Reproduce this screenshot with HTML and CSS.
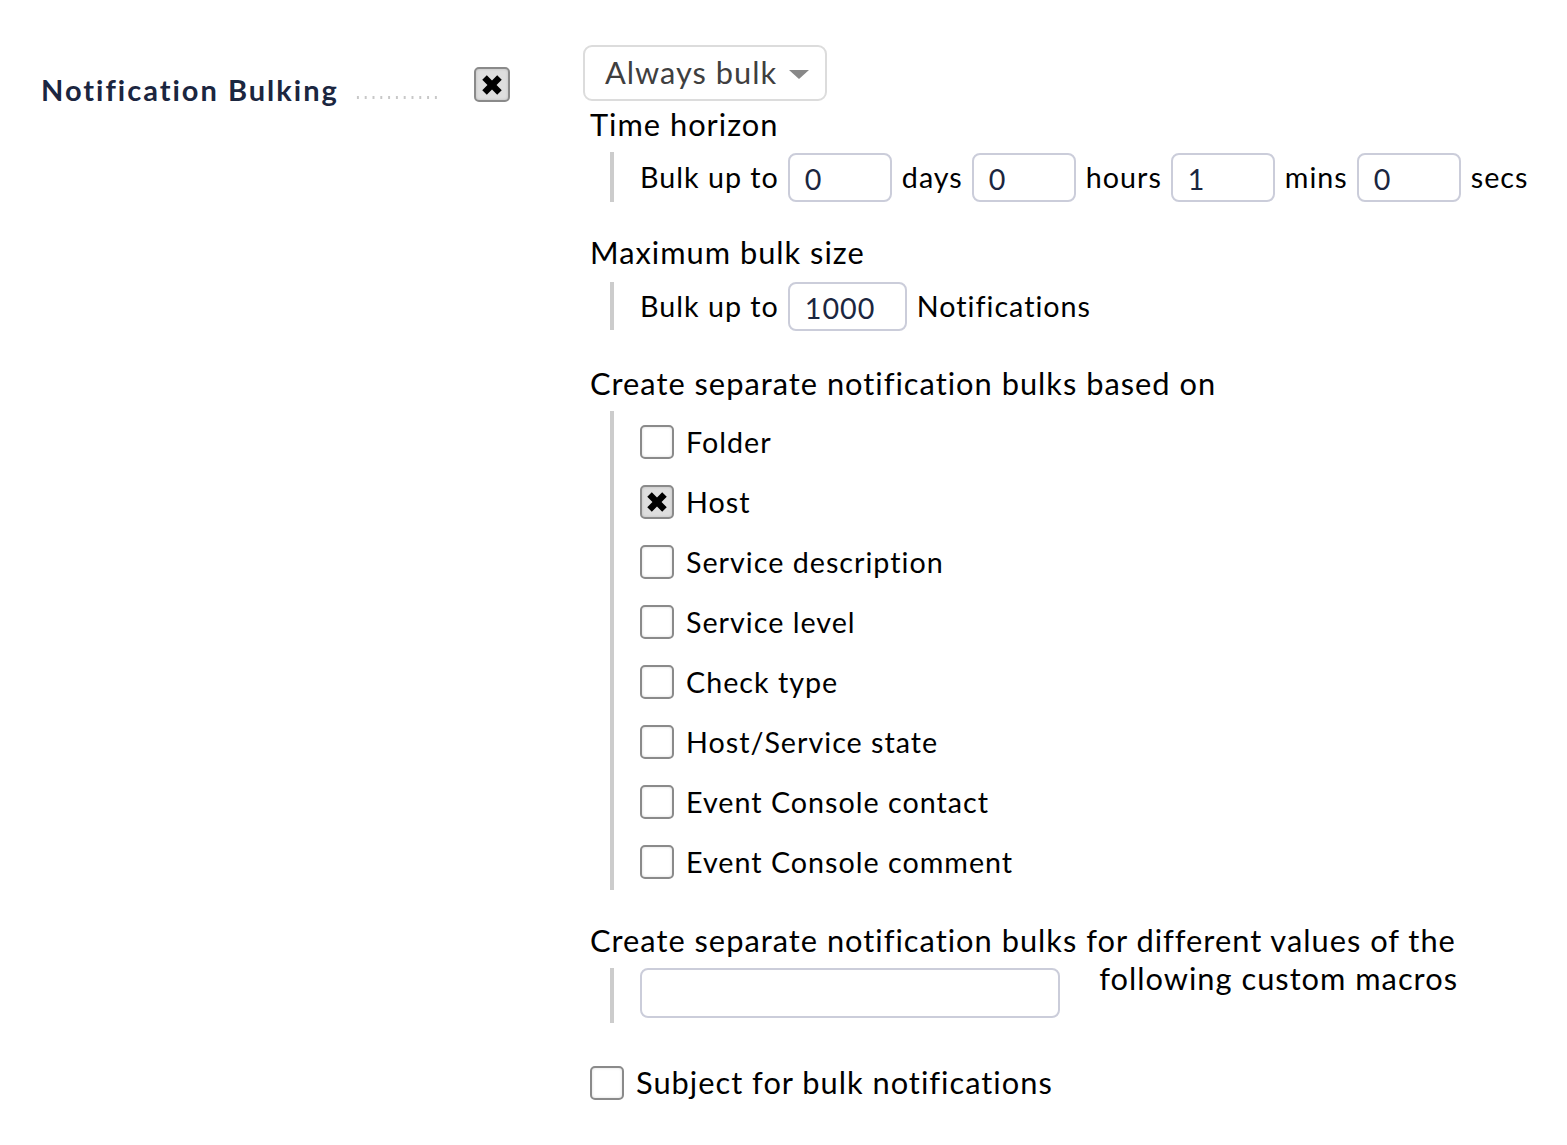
FILE: index.html
```html
<!DOCTYPE html>
<html>
<head>
<meta charset="utf-8">
<link rel="stylesheet" href="styles.css">
</head>
<body>
<div class="page">
  <div class="legend">
    <span class="legend-title">Notification Bulking</span>
    <span class="dots"></span>
    <span class="cb cb-checked cb-legend"><svg viewBox="0 0 20 20" class="x"><path d="M2.5 6 L6 2.5 L10 6.5 L14 2.5 L17.5 6 L13.5 10 L17.5 14 L14 17.5 L10 13.5 L6 17.5 L2.5 14 L6.5 10 Z"/></svg></span>
  </div>
  <div class="content">
    <div class="select">
      <span class="select-text">Always bulk</span>
      <span class="caret"></span>
    </div>

    <div class="title t-time">Time horizon</div>
    <div class="group g-time">
      <span class="txt">Bulk up to</span>
      <span class="input w104">0</span>
      <span class="txt">days</span>
      <span class="input w104">0</span>
      <span class="txt">hours</span>
      <span class="input w104">1</span>
      <span class="txt">mins</span>
      <span class="input w104">0</span>
      <span class="txt">secs</span>
    </div>

    <div class="title t-max">Maximum bulk size</div>
    <div class="group g-max">
      <span class="txt">Bulk up to</span>
      <span class="input w119 num">1000</span>
      <span class="txt">Notifications</span>
    </div>

    <div class="title t-sep">Create separate notification bulks based on</div>
    <div class="group g-list">
      <div class="row"><span class="cb"></span><span class="lbl">Folder</span></div>
      <div class="row"><span class="cb cb-checked"><svg viewBox="0 0 20 20" class="x"><path d="M2.5 6 L6 2.5 L10 6.5 L14 2.5 L17.5 6 L13.5 10 L17.5 14 L14 17.5 L10 13.5 L6 17.5 L2.5 14 L6.5 10 Z"/></svg></span><span class="lbl">Host</span></div>
      <div class="row"><span class="cb"></span><span class="lbl">Service description</span></div>
      <div class="row"><span class="cb"></span><span class="lbl">Service level</span></div>
      <div class="row"><span class="cb"></span><span class="lbl">Check type</span></div>
      <div class="row"><span class="cb"></span><span class="lbl">Host/Service state</span></div>
      <div class="row"><span class="cb"></span><span class="lbl">Event Console contact</span></div>
      <div class="row"><span class="cb"></span><span class="lbl">Event Console comment</span></div>
    </div>

    <div class="title t-macro">Create separate notification bulks for different values of the</div>
    <div class="group g-macro">
      <span class="input w420"></span>
      <span class="macro-tail">following custom macros</span>
    </div>

    <div class="subject">
      <span class="cb"></span><span class="lbl lbl-big">Subject for bulk notifications</span>
    </div>
  </div>
</div>
</body>
</html>
```

FILE: styles.css
```css
html, body {
  margin: 0;
  padding: 0;
  background: #ffffff;
}

body {
  font-family: Lato, "Open Sans", sans-serif;
  font-size: 28.7px;
  color: #000000;
  letter-spacing: 1px;
}

.page {
  display: flex;
  align-items: flex-start;
}

.legend {
  width: 583px;
  flex: none;
  display: flex;
  align-items: flex-start;
  padding-top: 67px;
  padding-left: 41px;
  box-sizing: border-box;
}

.legend-title {
  font-weight: bold;
  font-size: 29px;
  color: #1b2640;
  letter-spacing: 2px;
  line-height: 34px;
  margin-top: 6px;
}

.dots {
  width: 86px;
  height: 3px;
  margin-left: 15px;
  margin-top: 29px;
  background-image: radial-gradient(circle, #c8c8c8 1.2px, transparent 1.4px);
  background-size: 7.8px 3px;
  background-repeat: repeat-x;
}

.cb {
  width: 34px;
  height: 34px;
  box-sizing: border-box;
  border: 2px solid #8a8a8a;
  border-radius: 5px;
  background: #ffffff;
  box-shadow: inset 0 0 3px rgba(0,0,0,0.15);
  display: inline-flex;
  align-items: center;
  justify-content: center;
  flex: none;
}

.cb-checked {
  background: #dedede;
}

.cb-legend {
  width: 36px;
  height: 35px;
  margin-left: 34px;
}

.x {
  width: 26px;
  height: 26px;
  fill: #000;
}

.content {
  padding-top: 45px;
  display: flex;
  flex-direction: column;
  align-items: flex-start;
}

.select {
  width: 244px;
  height: 56px;
  box-sizing: border-box;
  border: 2px solid #dcdcdc;
  border-radius: 9px;
  display: flex;
  align-items: center;
  padding-left: 20px;
  padding-right: 16px;
  font-size: 30.8px;
  color: #3f3f3f;
  letter-spacing: 1px;
}

.select-text {
  flex: 1;
  margin-top: -2px;
}

.caret {
  width: 0;
  height: 0;
  border-left: 10px solid transparent;
  border-right: 10px solid transparent;
  border-top: 9px solid #888888;
  margin-top: 2px;
}

.title {
  font-size: 30.8px;
  line-height: 34px;
  padding-left: 7px;
  white-space: nowrap;
}

.t-time { margin-top: 7px; }
.t-max { margin-top: 34px; }
.t-sep { margin-top: 37px; }
.t-macro { margin-top: 32px; line-height: 38px; }

.group {
  margin-left: 27px;
  border-left: 4px solid #cccccc;
  padding-left: 26px;
}

.g-time, .g-max {
  display: flex;
  align-items: center;
  height: 50px;
}

.g-time { margin-top: 10px; }
.g-max { margin-top: 12px; height: 48px; }

.txt {
  margin-right: 9px;
}

.input {
  height: 49px;
  box-sizing: border-box;
  border: 2px solid #cbcdda;
  border-radius: 8px;
  padding-left: 15px;
  display: inline-flex;
  align-items: center;
  padding-top: 3px;
  color: #1b2640;
  margin-right: 10px;
  flex: none;
}

.w104 { width: 104px; }
.w119 { width: 119px; }
.w420 { width: 420px; height: 50px; }

.g-list {
  margin-top: 10px;
  padding-top: 1px;
  display: flex;
  flex-direction: column;
}

.row {
  height: 60px;
  display: flex;
  align-items: center;
}

.row:last-child {
  height: 58px;
  align-items: flex-start;
  padding-top: 13px;
  box-sizing: border-box;
}

.lbl {
  margin-left: 12px;
  line-height: 34px;
}

.lbl-big {
  font-size: 30.8px;
}

.g-macro {
  margin-top: 8px;
  height: 55px;
  width: 818px;
  display: flex;
  align-items: flex-start;
}

.macro-tail {
  margin-left: auto;
  font-size: 30.8px;
  line-height: 38px;
  margin-top: -8px;
  white-space: nowrap;
}

.subject {
  margin-top: 43px;
  display: flex;
  align-items: center;
  padding-left: 7px;
}
```
